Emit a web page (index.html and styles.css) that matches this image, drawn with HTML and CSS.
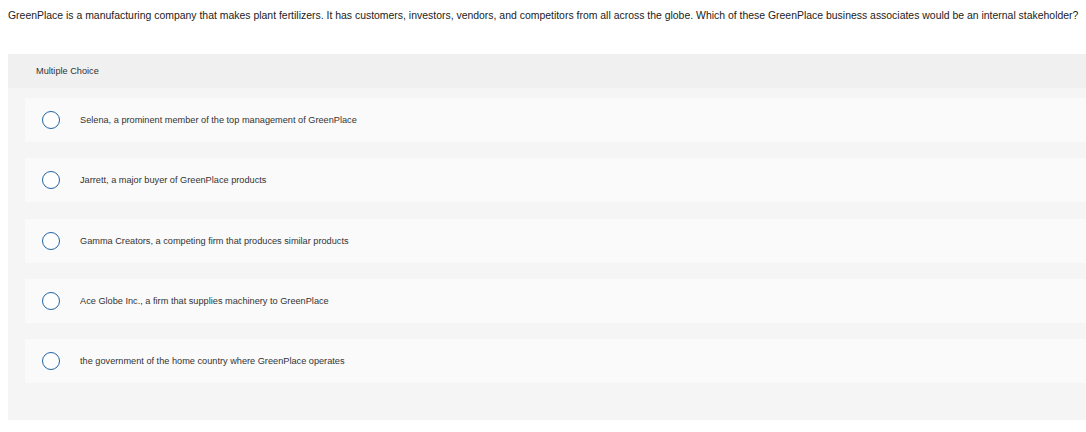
FILE: index.html
```html
<!DOCTYPE html>
<html>
<head>
<meta charset="utf-8">
<link rel="stylesheet" href="styles.css">
</head>
<body>
<p class="question">GreenPlace is a manufacturing company that makes plant fertilizers. It has customers, investors, vendors, and competitors from all across the globe. Which of these GreenPlace business associates would be an internal stakeholder?</p>
<div class="panel">
  <div class="panel-head">Multiple Choice</div>
  <div class="panel-body">
    <div class="option"><span class="radio"></span><span class="label">Selena, a prominent member of the top management of GreenPlace</span></div>
    <div class="option"><span class="radio"></span><span class="label">Jarrett, a major buyer of GreenPlace products</span></div>
    <div class="option"><span class="radio"></span><span class="label">Gamma Creators, a competing firm that produces similar products</span></div>
    <div class="option"><span class="radio"></span><span class="label">Ace Globe Inc., a firm that supplies machinery to GreenPlace</span></div>
    <div class="option"><span class="radio"></span><span class="label">the government of the home country where GreenPlace operates</span></div>
  </div>
</div>
</body>
</html>
```
FILE: styles.css
```css
html, body {
  margin: 0;
  padding: 0;
  background: #ffffff;
}
body {
  font-family: "Liberation Sans", Arial, sans-serif;
  color: #333333;
}
.question {
  margin: 0;
  padding: 9px 0 0 8px;
  font-size: 10.45px;
  line-height: 14px;
  white-space: nowrap;
  color: #222222;
}
.panel {
  margin: 31px 0 0 8px;
}
.panel-head {
  background: #f0f0f0;
  height: 34px;
  display: flex;
  align-items: center;
  padding-left: 28px;
  font-size: 9.2px;
  color: #333333;
}
.panel-body {
  background: #f5f5f5;
  padding: 10px 0 37px 17px;
  display: flex;
  flex-direction: column;
  gap: 16.25px;
}
.option {
  background: #fafafa;
  height: 44px;
  display: flex;
  align-items: center;
  padding-left: 17px;
}
.radio {
  width: 16px;
  height: 16px;
  border: 1.5px solid #1f63a3;
  border-radius: 50%;
  background: #ffffff;
  flex: none;
}
.label {
  margin-left: 20px;
  font-size: 9.2px;
  color: #333333;
}
```
